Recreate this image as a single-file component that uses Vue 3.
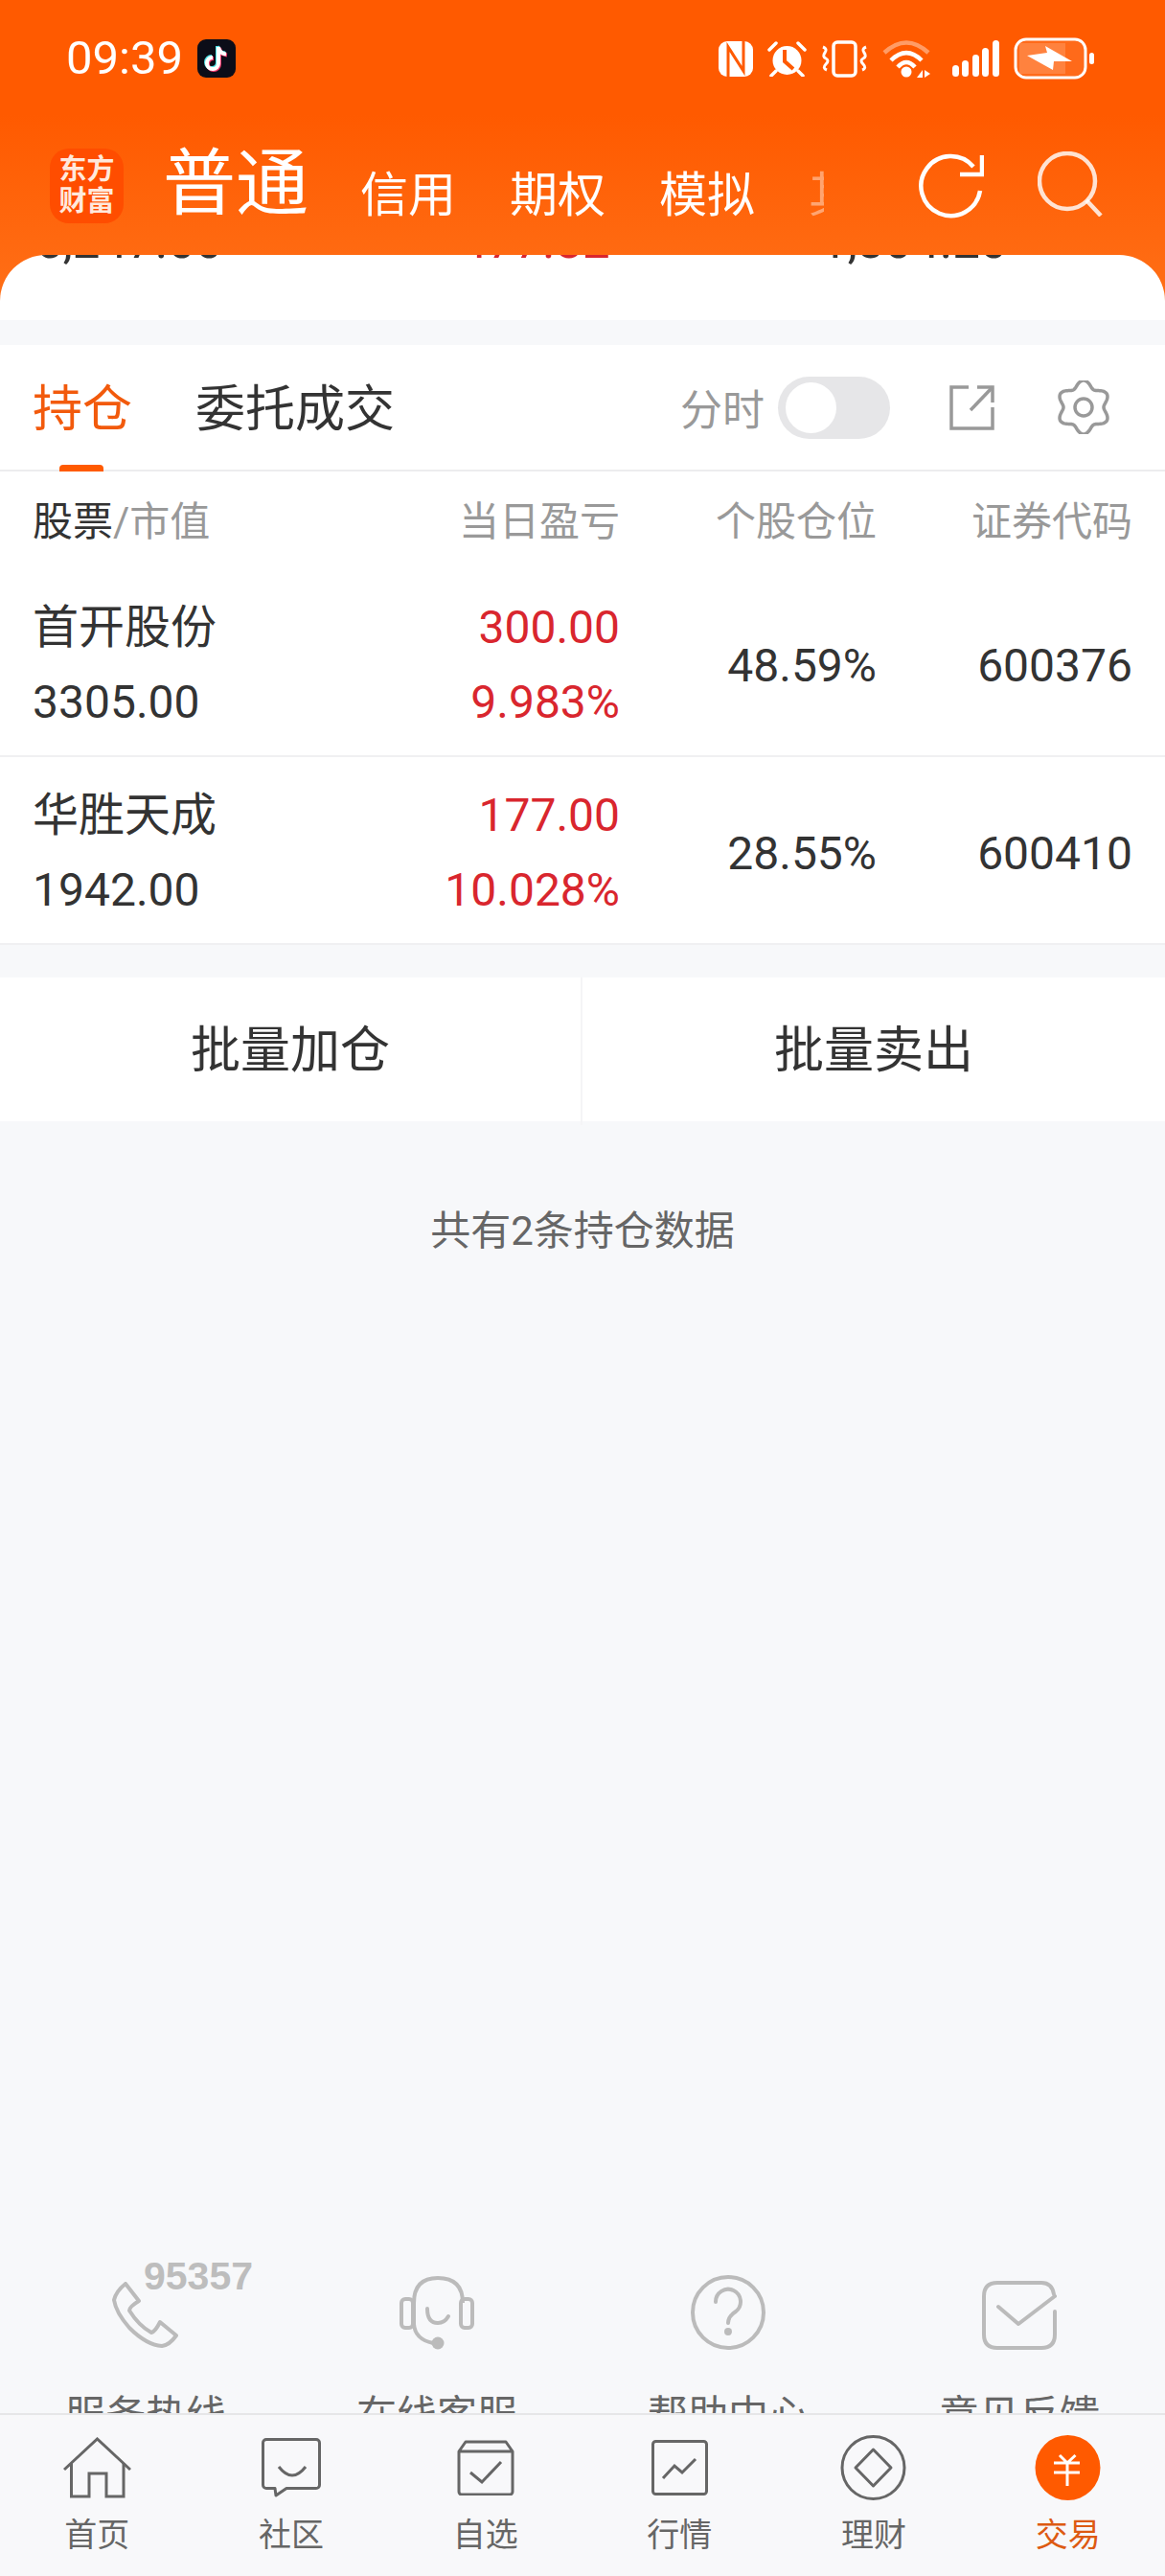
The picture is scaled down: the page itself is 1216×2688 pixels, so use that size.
<script setup>
const navTabs = ['信用', '期权', '模拟']
const rows = [
  { name: '首开股份', value: '3305.00', profit: '300.00', rate: '9.983%', weight: '48.59%', code: '600376' },
  { name: '华胜天成', value: '1942.00', profit: '177.00', rate: '10.028%', weight: '28.55%', code: '600410' }
]
let gear = ''
for (let i = 0; i <= 180; i++) {
  const t = (i / 180) * Math.PI * 2
  const r = 24.5 + 3.5 * Math.cos(6 * t)
  gear += (i ? 'L' : 'M') + (30 + r * Math.sin(t) * -1).toFixed(2) + ' ' + (28 + r * Math.cos(t) * 1).toFixed(2)
}
gear += 'Z'
</script>

<template>
  <div class="page">
    <div class="top">
      <div class="status">
        <span class="time">09:39</span>
        <svg class="tiktok" width="40" height="40" viewBox="0 0 40 40">
          <rect width="40" height="40" rx="9" fill="#0c0d18" />
          <g fill="none" stroke-width="4">
            <path d="M21 7v17a6 6 0 1 1-6-6M21 7c.5 4 3.5 7 8 7.5" stroke="#4fe3e8" />
            <path d="M23 9v17a6 6 0 1 1-6-6M23 9c.5 4 3.5 7 8 7.5" stroke="#f0356b" />
            <path d="M22 8v17a6 6 0 1 1-6-6M22 8c.5 4 3.5 7 8 7.5" stroke="#fff" />
          </g>
        </svg>
        <div class="status-icons">
          <svg width="36" height="37" viewBox="0 0 36 37">
            <rect width="36" height="37" rx="9" fill="#fff" />
            <path d="M10 37V6l16 25V0" fill="none" stroke="#ff5a00" stroke-width="3" />
          </svg>
          <svg width="41" height="38" viewBox="0 0 41 38">
            <circle cx="20.5" cy="21" r="15" fill="#fff" />
            <path d="M18 10v12l9 8" fill="none" stroke="#ff5a00" stroke-width="4" />
            <path d="M2 10l7-7M39 10l-7-7M9 32l-5 5M32 32l5 5" stroke="#fff" stroke-width="3.5" stroke-linecap="round" />
          </svg>
          <svg width="49" height="39" viewBox="0 0 49 39">
            <rect x="13" y="2" width="23" height="35" rx="4" fill="none" stroke="#fff" stroke-width="3.5" />
            <path d="M2 7q5 2 2 6t1 6q4 2 0 6t1 6M47 7q-5 2-2 6t-1 6q-4 2 0 6t-1 6" fill="none" stroke="#fff" stroke-width="3" />
          </svg>
          <svg width="50" height="39" viewBox="0 0 50 39">
            <path d="M2 13Q25-8 48 13" fill="none" stroke="#fff" stroke-opacity=".4" stroke-width="4.5" />
            <path d="M9 21Q25 5 41 21M16 28Q25 18 34 28" fill="none" stroke="#fff" stroke-width="4.5" />
            <circle cx="25" cy="33" r="5.5" fill="#fff" />
            <path d="M36 39l6-8v8zM44 31l6 4-6 4z" fill="#fff" />
          </svg>
          <svg class="signal" width="49" height="38" viewBox="0 0 49 38">
            <g fill="#fff">
              <rect x="0" y="26" width="7" height="12" rx="3.5" />
              <rect x="10" y="21" width="7" height="17" rx="3.5" />
              <rect x="21" y="15" width="7" height="23" rx="3.5" />
              <rect x="31" y="8" width="7" height="30" rx="3.5" />
              <rect x="42" y="0" width="7" height="38" rx="3.5" />
            </g>
          </svg>
          <svg width="85" height="44" viewBox="0 0 85 44">
            <rect x="2" y="2" width="73" height="40" rx="11" fill="#fff" fill-opacity=".1" stroke="#fff" stroke-width="3" />
            <path d="M6 6h48v32H6z" fill="#fff" fill-opacity=".16" />
            <path d="M14 19l21-3-2-7 28 16H42l-1 9z" fill="#fff" />
            <rect x="79" y="16" width="5" height="12" rx="2.5" fill="#fff" />
          </svg>
        </div>
      </div>

      <div class="nav">
        <div class="logo"><span>东方</span><span>财富</span></div>
        <span class="nav-main">普通</span>
        <div class="nav-tabs">
          <span v-for="tab in navTabs" :key="tab">{{ tab }}</span>
          <span class="nav-fade">其他</span>
        </div>
        <svg class="refresh" width="68" height="68" viewBox="0 0 68 68" fill="none" stroke="#fff" stroke-width="4.5">
          <path d="M64 39A31 31 0 1 1 57 14" />
          <path d="M66 2v20H43" />
        </svg>
        <svg class="search" width="68" height="68" viewBox="0 0 68 68" fill="none" stroke="#fff" stroke-opacity=".82" stroke-width="4.5">
          <circle cx="31" cy="31" r="29" />
          <path d="M51 51l15 16" />
        </svg>
      </div>

      <div class="summary">
        <div class="summary-row">
          <span>5,247.00</span>
          <span class="red">477.82</span>
          <span>1,304.20</span>
        </div>
      </div>
    </div>

    <section class="panel">
      <div class="tabs">
        <span class="tab active">持仓</span>
        <span class="tab">委托成交</span>
        <span class="split-label">分时</span>
        <span class="toggle"><i></i></span>
        <svg class="export" width="49" height="49" viewBox="0 0 49 49" fill="none" stroke="#999" stroke-width="3.5">
          <path d="M21 3H3v43h43V24" />
          <path d="M30 3h16v16" />
          <path d="M46 3L23 27" />
        </svg>
        <svg class="gear" width="60" height="56" viewBox="0 0 60 56" fill="none" stroke="#999" stroke-width="3.5">
          <path :d="gear" />
          <circle cx="30" cy="28" r="9" />
        </svg>
      </div>

      <div class="grid head">
        <span><b>股票</b>/市值</span>
        <span>当日盈亏</span>
        <span>个股仓位</span>
        <span>证券代码</span>
      </div>

      <div v-for="row in rows" :key="row.code" class="grid row">
        <div class="stack left">
          <span>{{ row.name }}</span>
          <span>{{ row.value }}</span>
        </div>
        <div class="stack red">
          <span>{{ row.profit }}</span>
          <span>{{ row.rate }}</span>
        </div>
        <span>{{ row.weight }}</span>
        <span>{{ row.code }}</span>
      </div>
    </section>

    <div class="actions">
      <span>批量加仓</span>
      <span>批量卖出</span>
    </div>

    <p class="note">共有2条持仓数据</p>

    <div class="help">
      <div class="help-item">
        <div class="help-icon">
          <span class="hotline">95357</span>
          <svg width="70" height="71" viewBox="0 0 70 71" fill="none" stroke="#bbb" stroke-width="4" stroke-linejoin="round">
            <path d="M14 2l14 18q-10 6-10 10 10 16 23 23 4-1 9-11l17 14q-7 10-15 11-16-1-34-19Q4 32 2 19 4 10 14 2z" />
          </svg>
        </div>
        <span>服务热线</span>
      </div>
      <div class="help-item">
        <div class="help-icon">
          <svg width="78" height="77" viewBox="0 0 78 77" fill="none" stroke="#bbb" stroke-width="4">
            <path d="M15 50V28Q15 2 40 2q26 0 26 26" />
            <rect x="2" y="24" width="12" height="30" rx="4" />
            <rect x="64" y="24" width="12" height="30" rx="4" />
            <path d="M15 50q1 16 20 20" />
            <path d="M29 34q0 15 11 15 7 0 11-7" stroke-linecap="round" />
            <circle cx="40" cy="70" r="6.5" fill="#bbb" stroke="none" />
          </svg>
        </div>
        <span>在线客服</span>
      </div>
      <div class="help-item">
        <div class="help-icon">
          <svg width="78" height="78" viewBox="0 0 78 78" fill="none" stroke="#bbb" stroke-width="4">
            <circle cx="39" cy="39" r="37" />
            <path d="M26 28a13 13 0 1 1 21 10q-8 5-8 12" stroke-linecap="round" />
            <circle cx="39" cy="59" r="4" fill="#bbb" stroke="none" />
          </svg>
        </div>
        <span>帮助中心</span>
      </div>
      <div class="help-item">
        <div class="help-icon">
          <svg width="78" height="72" viewBox="0 0 78 72" fill="none" stroke="#bbb" stroke-width="4" stroke-linecap="round" stroke-linejoin="round">
            <path d="M75 14Q73 2 62 2H16Q2 2 2 16v40q0 14 14 14h46q14 0 14-14V32" />
            <path d="M17 27l21 18 38-29" />
          </svg>
        </div>
        <span>意见反馈</span>
      </div>
    </div>

    <nav class="tabbar">
      <div class="bar-item">
        <div class="bar-icon">
          <svg width="71" height="64" viewBox="0 0 71 64" fill="none" stroke="#666" stroke-width="3">
            <path d="M1 34L35.5 2 70 34" />
            <path d="M8.500 27v35H27V38h18v24h18V27" />
          </svg>
        </div>
        <span>首页</span>
      </div>
      <div class="bar-item">
        <div class="bar-icon">
          <svg width="62" height="62" viewBox="0 0 62 62" fill="none" stroke="#666" stroke-width="3">
            <path d="M5 1.500h52A3.500 3.500 0 0 1 60.500 5v44a3.500 3.500 0 0 1-3.500 3.500H26L15 60l-1-7.500H5A3.500 3.500 0 0 1 1.500 49V5A3.500 3.500 0 0 1 5 1.500z" stroke-linejoin="round" />
            <path d="M18 30q14 18 28 0" />
          </svg>
        </div>
        <span>社区</span>
      </div>
      <div class="bar-item">
        <div class="bar-icon">
          <svg width="60" height="58" viewBox="0 0 60 58" fill="none" stroke="#666" stroke-width="3">
            <path d="M2 12v42a3 3 0 0 0 3 3h50a3 3 0 0 0 3-3V12L51 2H9zM2 12h56" stroke-linejoin="round" />
            <path d="M14 34l12 10 20-21" />
          </svg>
        </div>
        <span>自选</span>
      </div>
      <div class="bar-item">
        <div class="bar-icon">
          <svg width="59" height="58" viewBox="0 0 59 58" fill="none" stroke="#666" stroke-width="3">
            <rect x="1.500" y="1.500" width="56" height="55" rx="3" />
            <path d="M12 40l12-13 8 7 14-14" />
          </svg>
        </div>
        <span>行情</span>
      </div>
      <div class="bar-item">
        <div class="bar-icon">
          <svg width="69" height="68" viewBox="0 0 69 68" fill="none" stroke="#666" stroke-width="3">
            <circle cx="34.500" cy="34" r="32.500" />
            <path d="M34.500 15L53 34 34.500 53 16 34z" stroke-linejoin="round" />
          </svg>
        </div>
        <span>理财</span>
      </div>
      <div class="bar-item active">
        <div class="bar-icon">
          <svg width="69" height="68" viewBox="0 0 69 68" fill="none" stroke="#fff" stroke-width="3">
            <circle cx="34.500" cy="34" r="34" fill="#ff5a00" stroke="none" />
            <path d="M26 21l8 8 8.500-8M20 29h27M20 39h27M34 29v24" />
          </svg>
        </div>
        <span>交易</span>
      </div>
    </nav>
  </div>
</template>

<style scoped>
.page {
  display: flex;
  flex-direction: column;
  width: 1216px;
  height: 2688px;
  overflow: hidden;
  background: #f7f8fa;
  color: #333;
  font-family: Roboto, "Noto Sans CJK SC", sans-serif;
}
.top {
  flex: none;
  height: 334px;
  background: linear-gradient(#ff5a00 0, #ff5a00 120px, #ff7119 330px);
}
.status {
  display: flex;
  align-items: center;
  height: 122px;
  padding: 0 73px 0 69px;
  color: #fff;
}
.time {
  font-size: 49px;
  line-height: 60px;
  width: 137px;
}
.status-icons {
  display: flex;
  align-items: center;
  gap: 15px;
  margin-left: auto;
}
.status-icons svg {
  display: block;
}
.status-icons .signal {
  margin-left: 8px;
}
.nav {
  display: flex;
  align-items: center;
  height: 144px;
  padding-left: 52px;
  color: #fff;
}
.logo {
  display: flex;
  flex-direction: column;
  align-items: center;
  justify-content: center;
  flex: none;
  width: 77px;
  height: 78px;
  border-radius: 20px;
  background: #ff4d00;
  font-size: 29px;
  font-weight: 700;
  line-height: 33px;
  color: #ffe9dc;
}
.nav-main {
  flex: none;
  margin-left: 41px;
  width: 154px;
  font-size: 76px;
  font-weight: 400;
  line-height: 90px;
  margin-top: -4px;
}
.nav-tabs {
  display: flex;
  gap: 56px;
  margin-left: 52px;
  margin-top: 20px;
  font-size: 50px;
  line-height: 60px;
}
.nav-fade {
  width: 16px;
  overflow: hidden;
  white-space: nowrap;
  opacity: .42;
}
.refresh {
  flex: none;
  margin-left: 99px;
  margin-top: 0;
}
.search {
  flex: none;
  margin-left: 56px;
  margin-top: -4px;
}
.summary {
  height: 68px;
  overflow: hidden;
  border-radius: 48px 48px 0 0;
  background: #fff;
}
.summary-row {
  display: grid;
  grid-template-columns: 443px 376px 1fr;
  margin-top: -38px;
  padding-left: 37px;
  font-size: 51px;
  line-height: 48px;
}
.red {
  color: #d9262e;
}
.panel {
  flex: none;
  margin-top: 26px;
  background: #fff;
}
.tabs {
  display: flex;
  align-items: center;
  height: 132px;
  padding: 0 55px 0 34px;
  border-bottom: 2px solid #ececee;
  box-sizing: border-box;
}
.tab {
  position: relative;
  font-size: 52px;
  line-height: 130px;
  margin-right: 66px;
  top: 3px;
}
.tab.active {
  color: #f25a0c;
}
.tab.active::after {
  content: "";
  position: absolute;
  left: 28px;
  bottom: 1px;
  width: 46px;
  height: 7px;
  border-radius: 4px 4px 0 0;
  background: #ff5a00;
}
.split-label {
  margin-left: auto;
  font-size: 44px;
  color: #999;
}
.toggle {
  display: block;
  width: 117px;
  height: 65px;
  margin-left: 14px;
  border-radius: 33px;
  background: #e6e6e8;
  box-sizing: border-box;
  padding: 6px 8px;
}
.toggle i {
  display: block;
  width: 53px;
  height: 53px;
  border-radius: 50%;
  background: #fff;
}
.export {
  margin-left: 61px;
}
.gear {
  margin-left: 62px;
}
.grid {
  display: grid;
  grid-template-columns: 300px 313px 268px 267px;
  align-items: center;
  padding: 0 34px;
  text-align: right;
}
.head {
  height: 102px;
  padding-bottom: 6px;
  box-sizing: border-box;
  font-size: 42px;
  color: #999;
}
.head span:first-child {
  text-align: left;
}
.head b {
  font-weight: 400;
  color: #333;
}
.row {
  height: 196px;
  box-sizing: border-box;
  padding-top: 6px;
  border-bottom: 2px solid #f0f0f2;
  font-size: 48px;
}
.stack {
  display: flex;
  flex-direction: column;
  line-height: 78px;
}
.left {
  text-align: left;
}
.actions {
  flex: none;
  display: grid;
  grid-template-columns: 1fr 1fr;
  height: 150px;
  margin-top: 34px;
  background: #fff;
  font-size: 52px;
  text-align: center;
  line-height: 154px;
}
.actions span:first-child {
  border-right: 2px solid #f4f4f6;
}
.note {
  flex: 1;
  margin: 0;
  padding-top: 90px;
  font-size: 42px;
  line-height: 50px;
  color: #666;
  text-align: center;
}
.help {
  flex: none;
  display: grid;
  grid-template-columns: repeat(4, 304px);
  height: 158px;
  overflow: hidden;
  font-size: 42px;
  line-height: 60px;
  color: #666;
  text-align: center;
}
.help-icon {
  position: relative;
  display: flex;
  align-items: flex-end;
  justify-content: center;
  height: 92px;
  margin-bottom: 39px;
}
.hotline {
  position: absolute;
  left: 150px;
  top: -15px;
  font-family: "Liberation Sans", sans-serif;
  font-size: 41px;
  font-weight: 700;
  line-height: 60px;
  color: #bdbdbd;
}
.tabbar {
  flex: none;
  display: grid;
  grid-template-columns: repeat(6, 1fr);
  height: 170px;
  box-sizing: border-box;
  padding-top: 21px;
  border-top: 2px solid #e6e6e8;
  background: #f8f8fa;
  font-size: 34px;
  line-height: 40px;
  color: #666;
  text-align: center;
}
.bar-icon {
  display: flex;
  align-items: center;
  justify-content: center;
  height: 68px;
  margin-bottom: 16px;
}
.bar-item.active {
  color: #dd5a12;
}
</style>
